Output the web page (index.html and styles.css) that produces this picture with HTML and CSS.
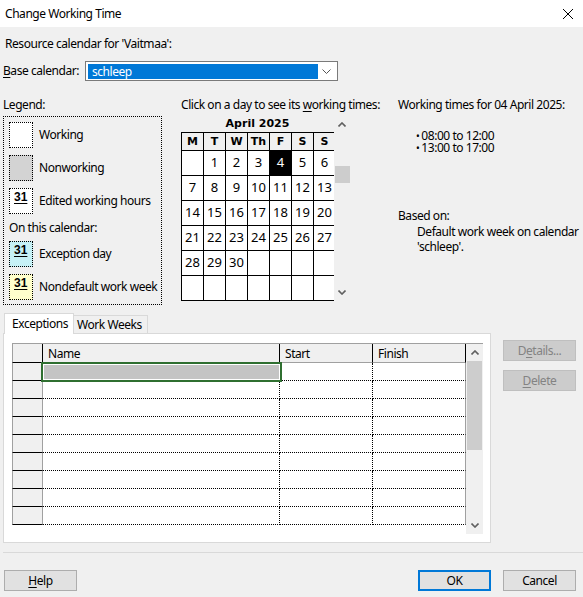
FILE: index.html
```html
<!DOCTYPE html>
<html>

<head>
    <title>Change Working Time</title>
    <link rel="stylesheet" href="styles.css">
</head>

<body>
    <div class="titlebar">
        <span>Change Working Time</span>
        <svg class="close" width="10" height="10" viewBox="0 0 10 10">
            <path d="M0 0L10 10M10 0L0 10" stroke="#000" stroke-width="1" fill="none" />
        </svg>
    </div>

    <div class="resource">Resource calendar for 'Vaitmaa':</div>

    <div class="base-row">
        <label class="base-label"><u>B</u>ase calendar:</label>
        <div class="combo">
            <span class="combo-value">schleep</span>
            <svg class="combo-arrow" width="9" height="5" viewBox="0 0 9 5">
                <path d="M0.5 0.5L4.5 4.5L8.5 0.5" stroke="#555" stroke-width="1" fill="none" />
            </svg>
        </div>
    </div>

    <div class="main">
        <div class="legend">
            <div>Legend:</div>
            <div class="legend-box">
                <div class="legend-item"><span class="swatch"></span>Working</div>
                <div class="legend-item"><span class="swatch nonworking"></span>Nonworking</div>
                <div class="legend-item"><span class="swatch"><u>31</u></span>Edited working hours</div>
                <div class="legend-sub">On this calendar:</div>
                <div class="legend-item"><span class="swatch exception"><u>31</u></span>Exception day</div>
                <div class="legend-item"><span class="swatch nondefault"><u>31</u></span>Nondefault work week</div>
            </div>
        </div>

        <div class="calendar">
            <div class="cal-hint">Click on a day to see its <u>w</u>orking times:</div>
            <div class="cal-body">
                <div class="cal-left">
                    <div class="month">April 2025</div>
                    <div class="cal-clip">
                        <div class="cal-grid">
                            <div class="dh">M</div><div class="dh">T</div><div class="dh">W</div><div class="dh">Th</div><div class="dh">F</div><div class="dh">S</div><div class="dh">S</div>
                            <div class="d"></div><div class="d">1</div><div class="d">2</div><div class="d">3</div><div class="d sel">4</div><div class="d">5</div><div class="d">6</div>
                            <div class="d">7</div><div class="d">8</div><div class="d">9</div><div class="d">10</div><div class="d">11</div><div class="d">12</div><div class="d">13</div>
                            <div class="d">14</div><div class="d">15</div><div class="d">16</div><div class="d">17</div><div class="d">18</div><div class="d">19</div><div class="d">20</div>
                            <div class="d">21</div><div class="d">22</div><div class="d">23</div><div class="d">24</div><div class="d">25</div><div class="d">26</div><div class="d">27</div>
                            <div class="d">28</div><div class="d">29</div><div class="d">30</div><div class="d"></div><div class="d"></div><div class="d"></div><div class="d"></div>
                            <div class="d"></div><div class="d"></div><div class="d"></div><div class="d"></div><div class="d"></div><div class="d"></div><div class="d"></div>
                        </div>
                    </div>
                </div>
                <div class="cal-scroll">
                    <div class="arrow-box">
                        <svg width="8" height="5" viewBox="0 0 8 5"><path d="M0.5 4.5L4 1L7.5 4.5" stroke="#606060" stroke-width="1.6" fill="none" /></svg>
                    </div>
                    <div class="cal-thumb"></div>
                    <div class="arrow-box bottom">
                        <svg width="8" height="5" viewBox="0 0 8 5"><path d="M0.5 0.5L4 4L7.5 0.5" stroke="#606060" stroke-width="1.6" fill="none" /></svg>
                    </div>
                </div>
            </div>
        </div>

        <div class="info">
            <div>Working times for 04 April 2025:</div>
            <ul class="times">
                <li>08:00 to 12:00</li>
                <li>13:00 to 17:00</li>
            </ul>
            <div class="based">Based on:</div>
            <div class="based-text">Default work week on calendar<br>'schleep'.</div>
        </div>
    </div>

    <div class="lower">
        <div class="tabs-col">
            <div class="tabstrip">
                <div class="tab active">Exceptions</div>
                <div class="tab">Work Weeks</div>
            </div>
            <div class="panel">
                <div class="grid-wrap">
                    <div class="xtable">
                        <div class="xrow xhead">
                            <div class="c0"></div>
                            <div class="c1">Name</div>
                            <div class="c2">Start</div>
                            <div class="c3">Finish</div>
                        </div>
                        <div class="xrow">
                            <div class="c0"></div>
                            <div class="c1 current"><div class="selbox"></div></div>
                            <div class="c2"></div>
                            <div class="c3"></div>
                        </div>
                        <div class="xrow"><div class="c0"></div><div class="c1"></div><div class="c2"></div><div class="c3"></div></div>
                        <div class="xrow"><div class="c0"></div><div class="c1"></div><div class="c2"></div><div class="c3"></div></div>
                        <div class="xrow"><div class="c0"></div><div class="c1"></div><div class="c2"></div><div class="c3"></div></div>
                        <div class="xrow"><div class="c0"></div><div class="c1"></div><div class="c2"></div><div class="c3"></div></div>
                        <div class="xrow"><div class="c0"></div><div class="c1"></div><div class="c2"></div><div class="c3"></div></div>
                        <div class="xrow"><div class="c0"></div><div class="c1"></div><div class="c2"></div><div class="c3"></div></div>
                        <div class="xrow"><div class="c0"></div><div class="c1"></div><div class="c2"></div><div class="c3"></div></div>
                        <div class="xrow"><div class="c0"></div><div class="c1"></div><div class="c2"></div><div class="c3"></div></div>
                    </div>
                    <div class="xscroll">
                        <div class="xarrow">
                            <svg width="8" height="5" viewBox="0 0 8 5"><path d="M0.5 4.5L4 1L7.5 4.5" stroke="#606060" stroke-width="1.6" fill="none" /></svg>
                        </div>
                        <div class="xthumb"></div>
                        <div class="xarrow bottom">
                            <svg width="8" height="5" viewBox="0 0 8 5"><path d="M0.5 0.5L4 4L7.5 0.5" stroke="#606060" stroke-width="1.6" fill="none" /></svg>
                        </div>
                    </div>
                </div>
            </div>
        </div>
        <div class="side-buttons">
            <button class="btn" disabled>D<u>e</u>tails...</button>
            <button class="btn" disabled><u>D</u>elete</button>
        </div>
    </div>

    <div class="sep"></div>

    <div class="footer">
        <button class="btn help"><u>H</u>elp</button>
        <button class="btn ok">OK</button>
        <button class="btn cancel">Cancel</button>
    </div>
</body>

</html>
```

FILE: styles.css
```css
body {
    margin: 0;
    width: 583px;
    height: 597px;
    overflow: hidden;
    background-color: #f0f0f0;
    font-family: "Noto Sans", sans-serif;
    font-size: 12px;
    letter-spacing: -0.45px;
    line-height: 16px;
    color: #000;
}

u {
    text-underline-offset: 2px;
}

.titlebar {
    height: 27px;
    background-color: #fff;
    display: flex;
    align-items: center;
    justify-content: space-between;
    padding: 0 10px 0 5px;
}

.resource {
    margin-top: 9px;
    padding-left: 5px;
}

.base-row {
    display: flex;
    align-items: center;
    height: 20px;
    margin-top: 9px;
}

.base-label {
    width: 85px;
    padding-left: 3px;
    box-sizing: border-box;
}

.combo {
    width: 253px;
    height: 20px;
    box-sizing: border-box;
    border: 1px solid #7a7a7a;
    background-color: #fff;
    display: flex;
    align-items: center;
    padding: 0 2px;
}

.combo-value {
    width: 230px;
    height: 15px;
    line-height: 15px;
    padding-left: 4px;
    box-sizing: border-box;
    background-color: #0078d7;
    color: #fff;
}

.combo-arrow {
    margin-left: 4px;
}

/* legend + calendar + working times */
.main {
    display: flex;
    margin-top: 16px;
}

.legend {
    margin-left: 3px;
    width: 159px;
}

.legend-box {
    margin-top: 3px;
    border: 1px dotted #000;
    padding: 5px 0 4px 5px;
}

.legend-item {
    display: flex;
    align-items: center;
    height: 26px;
}

.legend-item + .legend-item {
    margin-top: 7px;
}

.legend-sub {
    margin: 6px 0 5px;
}

.swatch {
    width: 24px;
    height: 26px;
    box-sizing: border-box;
    border: 1px dotted #000;
    background-color: #fff;
    margin-right: 6px;
    padding: 2px 0 0 4px;
    font-family: "Liberation Sans", sans-serif;
    font-weight: bold;
    font-size: 12px;
    line-height: 13px;
    letter-spacing: 0;
}

.swatch.nonworking {
    background-color: #d3d3d3;
}

.swatch.exception {
    background-color: #c6f1f6;
}

.swatch.nondefault {
    background-color: #ffffcc;
}

.calendar {
    margin-left: 19px;
    width: 169px;
}

.cal-hint {
    white-space: nowrap;
}

.cal-body {
    display: flex;
    margin-top: 3px;
}

.cal-left {
    width: 153px;
}

.month {
    height: 16px;
    line-height: 16px;
    text-align: center;
    font-family: "DejaVu Sans", sans-serif;
    font-weight: bold;
    font-size: 11px;
    letter-spacing: 0;
}

.cal-clip {
    width: 153px;
    overflow: hidden;
}

.cal-grid {
    display: grid;
    grid-template-columns: repeat(7, 21px);
    grid-template-rows: 17px repeat(6, 24px);
    gap: 1px;
    padding: 1px;
    width: max-content;
    background-color: #000;
}

.dh {
    background-color: #f0f0f0;
    text-align: center;
    font-family: "DejaVu Sans", sans-serif;
    font-weight: bold;
    font-size: 11px;
    line-height: 17px;
    letter-spacing: 0;
}

.d {
    background-color: #fff;
    text-align: center;
    font-size: 13px;
    line-height: 22px;
    letter-spacing: 0;
}

.d.sel {
    background-color: #000;
    color: #fff;
}

.cal-scroll {
    width: 16px;
    height: 184px;
    display: flex;
    flex-direction: column;
}

.arrow-box {
    height: 16px;
    display: flex;
    align-items: center;
    justify-content: center;
}

.arrow-box.bottom {
    margin-top: auto;
}

.cal-thumb {
    margin: 34px 0 0 1px;
    width: 15px;
    height: 17px;
    background-color: #cdcdcd;
}

.info {
    margin-left: 48px;
}

.times {
    margin: 17px 0 0;
    padding-left: 18px;
    list-style: none;
    line-height: 12px;
}

.times li::before {
    content: "\2022";
    margin-right: 2px;
    font-size: 10px;
}

.based {
    margin-top: 54px;
}

.based-text {
    padding-left: 19px;
    line-height: 15px;
}

/* tabs, exceptions grid */
.lower {
    display: flex;
    margin-top: 8px;
}

.tabs-col {
    margin-left: 3px;
    width: 488px;
}

.tabstrip {
    display: flex;
    align-items: flex-end;
    height: 20px;
    padding-left: 1px;
}

.tab {
    height: 18px;
    width: 74px;
    box-sizing: border-box;
    border: 1px solid #d9d9d9;
    border-bottom: none;
    border-left: none;
    padding-left: 3px;
    line-height: 18px;
}

.tab.active {
    position: relative;
    z-index: 1;
    height: 21px;
    width: 70px;
    margin-bottom: -1px;
    border-left: 1px solid #d9d9d9;
    background-color: #fff;
    padding-left: 7px;
    line-height: 19px;
}

.panel {
    height: 210px;
    box-sizing: border-box;
    border: 1px solid #d9d9d9;
    background-color: #fff;
    padding: 9px 0 0 8px;
}

.grid-wrap {
    display: flex;
    width: 471px;
    height: 190px;
    overflow: hidden;
    border-top: 1px solid #a0a0a0;
}

.xtable {
    width: 454px;
}

.xrow {
    display: flex;
    height: 18px;
}

.xrow > div {
    box-sizing: border-box;
    height: 18px;
}

.c0 {
    width: 31px;
    background-color: #f0f0f0;
    border-left: 1px solid #a0a0a0;
    border-right: 1px solid #a0a0a0;
    border-bottom: 1px solid #000;
}

.c1 {
    width: 237px;
}

.c2,
.c3 {
    width: 93px;
}

.c1,
.c2 {
    border-right: 1px dotted #000;
    border-bottom: 1px dotted #000;
}

.c3 {
    border-right: 1px solid #a0a0a0;
    border-bottom: 1px dotted #000;
}

.xhead {
    height: 19px;
}

.xhead > div {
    height: 19px;
    background-color: #f0f0f0;
    border-right: 1px solid #000;
    border-bottom: 1px solid #a0a0a0;
    padding-left: 5px;
    line-height: 19px;
}

.xhead > .c0 {
    border-bottom-color: #000;
}

.current {
    position: relative;
}

.selbox {
    position: absolute;
    left: -2px;
    top: -1px;
    width: 241px;
    height: 20px;
    box-sizing: border-box;
    border: 2px solid #2f6f30;
    background-color: #c4c4c4;
    box-shadow: inset 0 0 0 1px #fff;
}

.xscroll {
    width: 17px;
    display: flex;
    flex-direction: column;
    background-color: #f0f0f0;
}

.xarrow {
    height: 17px;
    display: flex;
    align-items: center;
    justify-content: center;
}

.xarrow.bottom {
    margin-top: auto;
}

.xthumb {
    margin-left: 1px;
    width: 15px;
    height: 89px;
    background-color: #cdcdcd;
}

.side-buttons {
    display: flex;
    flex-direction: column;
    gap: 9px;
    margin: 27px 0 0 12px;
}

.btn {
    width: 73px;
    height: 21px;
    box-sizing: border-box;
    border: 1px solid #adadad;
    background-color: #e1e1e1;
    font-family: inherit;
    font-size: 12px;
    letter-spacing: -0.45px;
    color: #000;
    padding: 0;
}

.btn:disabled {
    background-color: #cccccc;
    border-color: #bfbfbf;
    color: #838383;
}

.sep {
    margin: 9px 0 0 3px;
    border-top: 1px solid #d9d9d9;
}

.footer {
    display: flex;
    margin-top: 17px;
}

.help {
    margin-left: 4px;
}

.ok {
    margin-left: auto;
    border: 2px solid #0078d7;
}

.cancel {
    margin: 0 7px 0 12px;
}
```
